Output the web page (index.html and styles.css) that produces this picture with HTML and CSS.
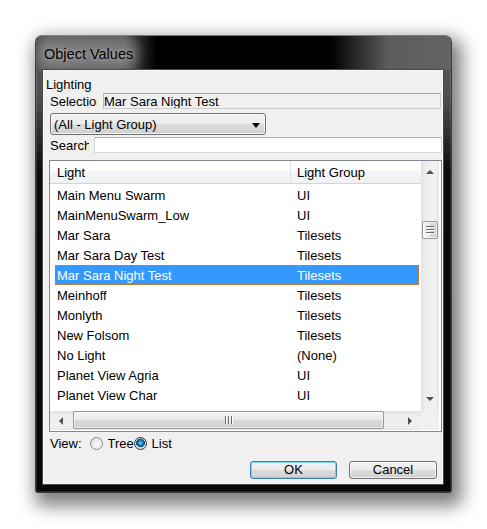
FILE: index.html
```html
<!DOCTYPE html>
<html>
<head>
<meta charset="utf-8">
<title>Object Values</title>
<link rel="stylesheet" href="styles.css">
</head>
<body>
<div class="window">
  <div class="titlebar"><span class="title">Object Values</span></div>
  <div class="client">
    <div class="group-label">Lighting</div>
    <div class="field-row">
      <span class="lbl lbl-sel">Selection</span>
      <div class="textbox readonly">Mar Sara Night Test</div>
    </div>
    <div class="combo"><span class="combo-text">(All - Light Group)</span><span class="combo-arrow"></span></div>
    <div class="field-row">
      <span class="lbl lbl-search">Search</span>
      <div class="textbox search"></div>
    </div>
    <div class="list">
      <div class="list-main">
        <div class="list-header">
          <div class="hcol h1">Light</div>
          <div class="hcol h2">Light Group</div>
        </div>
        <div class="rows">
          <div class="row"><span class="c1">Main Menu Swarm</span><span class="c2">UI</span></div>
          <div class="row"><span class="c1">MainMenuSwarm_Low</span><span class="c2">UI</span></div>
          <div class="row"><span class="c1">Mar Sara</span><span class="c2">Tilesets</span></div>
          <div class="row"><span class="c1">Mar Sara Day Test</span><span class="c2">Tilesets</span></div>
          <div class="row selected"><span class="c1">Mar Sara Night Test</span><span class="c2">Tilesets</span></div>
          <div class="row"><span class="c1">Meinhoff</span><span class="c2">Tilesets</span></div>
          <div class="row"><span class="c1">Monlyth</span><span class="c2">Tilesets</span></div>
          <div class="row"><span class="c1">New Folsom</span><span class="c2">Tilesets</span></div>
          <div class="row"><span class="c1">No Light</span><span class="c2">(None)</span></div>
          <div class="row"><span class="c1">Planet View Agria</span><span class="c2">UI</span></div>
          <div class="row"><span class="c1">Planet View Char</span><span class="c2">UI</span></div>
        </div>
      </div>
      <div class="vscroll">
        <div class="sb-btn sb-up"><span class="arr arr-up"></span></div>
        <div class="sb-track-v"><div class="thumb-v"><span class="grip-h"></span><span class="grip-h"></span><span class="grip-h"></span></div></div>
        <div class="sb-btn sb-down"><span class="arr arr-down"></span></div>
      </div>
      <div class="hscroll">
        <div class="sb-btn sb-left"><span class="arr arr-left"></span></div>
        <div class="sb-track-h"><div class="thumb-h"><span class="grip-v"></span><span class="grip-v"></span><span class="grip-v"></span></div></div>
        <div class="sb-btn sb-right"><span class="arr arr-right"></span></div>
      </div>
      <div class="corner"></div>
    </div>
    <div class="view-row">
      <span class="view-lbl">View:</span>
      <span class="radio r-tree"></span>
      <span class="radio-lbl tree-lbl">Tree</span>
      <span class="radio checked r-list"></span>
      <span class="radio-lbl">List</span>
    </div>
    <div class="buttons">
      <div class="btn btn-default">OK</div>
      <div class="btn btn-cancel">Cancel</div>
    </div>
  </div>
</div>
</body>
</html>
```
FILE: styles.css
```css
html, body {
  margin: 0;
  padding: 0;
  background: #ffffff;
}
body {
  font-family: "Liberation Sans", Arial, sans-serif;
  font-size: 13px;
  color: #000;
  width: 487px;
  height: 529px;
  overflow: hidden;
}
.window {
  box-sizing: border-box;
  width: 417px;
  height: 458px;
  margin: 35px 0 0 35px;
  border: 1px solid #3a3a3a;
  border-top-color: #7a7a7a;
  border-radius: 7px 7px 3px 3px;
  background: linear-gradient(to bottom, #575757 0, #505050 60px, #0c0c0c 135px, #080808 100%);
  box-shadow: inset 0 0 0 1px rgba(255,255,255,0.12), 5px 8px 17px 5px rgba(0,0,0,0.5);
  padding: 0 8px 8px 7px;
  display: flex;
  flex-direction: column;
}
.titlebar {
  box-sizing: border-box;
  height: 34px;
  margin: 0 -8px 0 -7px;
  padding: 4px 0 0 8px;
  line-height: 29px;
  border-radius: 6px 6px 0 0;
  background: linear-gradient(to right, #555555 0, #525252 88px, #000 120px, #000 295px, #5c5c5c 352px, #646464 100%);
}
.title {
  display: inline-block;
  font-size: 14.5px;
  line-height: 22px;
  color: #000;
  background: rgba(255,255,255,0.2);
  border-radius: 8px;
  box-shadow: 0 0 9px 7px rgba(255,255,255,0.2);
  text-shadow: 0 0 6px rgba(255,255,255,0.75);
}
.client {
  box-sizing: border-box;
  width: 400px;
  height: 414px;
  border: 1px solid #f7f7f7;
  box-shadow: 0 0 0 1px #4a4a4a;
  background: #f0f0f0;
  display: flex;
  flex-direction: column;
}
.group-label {
  margin: 6px 0 0 2px;
  height: 14px;
  line-height: 15px;
}
.field-row {
  display: flex;
  margin-top: 2px;
  height: 16px;
  padding-left: 6px;
}
.lbl {
  white-space: nowrap;
  overflow: hidden;
  height: 16px;
  line-height: 18px;
  flex: none;
}
.lbl-sel { width: 47px; margin-right: 6px; }
.lbl-search { width: 39px; margin-right: 5px; }
.textbox {
  box-sizing: border-box;
  height: 16px;
  line-height: 16px;
  overflow: hidden;
  border: 1px solid #cdcdcd;
  border-top-color: #a8a8a8;
  border-left-color: #b8b8b8;
  white-space: nowrap;
}
.readonly { width: 338px; background: #f0f0f0; }
.search { width: 348px; background: #ffffff; border-color: #d4d4d4; border-top-color: #b4b4b4; }
.combo {
  box-sizing: border-box;
  margin: 4px 0 0 6px;
  width: 216px;
  height: 22px;
  border: 1px solid #707070;
  border-radius: 3px;
  background: linear-gradient(#f2f2f2 0, #ebebeb 50%, #dddddd 51%, #cfcfcf 100%);
  box-shadow: inset 0 0 0 1px rgba(255,255,255,0.7);
  display: flex;
  align-items: center;
  justify-content: space-between;
  padding: 2px 5px 0 3px;
  line-height: 20px;
}
.combo-arrow {
  width: 0;
  height: 0;
  border-left: 4px solid transparent;
  border-right: 4px solid transparent;
  border-top: 5px solid #000;
}
.list {
  box-sizing: border-box;
  margin: 7px 0 0 5px;
  width: 393px;
  height: 272px;
  border: 1px solid #828790;
  background: #fff;
  display: grid;
  grid-template-columns: 371px 18px;
  grid-template-rows: 250px 19px;
  padding: 0 2px 1px 0;
}
.list-main {
  overflow: hidden;
  display: flex;
  flex-direction: column;
}
.list-header {
  box-sizing: border-box;
  height: 23px;
  flex: none;
  line-height: 22px;
  display: flex;
  border-bottom: 1px solid #d5d5d5;
  background: linear-gradient(#ffffff 0, #ffffff 45%, #f4f5f7 46%, #f0f1f3 100%);
}
.hcol { box-sizing: border-box; white-space: nowrap; padding-top: 1px; height: 22px; overflow: hidden; }
.h1 { width: 241px; padding-left: 7px; border-right: 1px solid #e0e1e3; }
.h2 { padding-left: 6px; }
.rows { padding-top: 1px; overflow: hidden; }
.row {
  display: flex;
  height: 20px;
  line-height: 22px;
  margin: 0 2px 0 5px;
  padding-left: 2px;
  white-space: nowrap;
}
.row .c1 { width: 240px; flex: none; }
.row.selected {
  background: #3399ff;
  color: #fff;
  outline: 1px dotted #c07a3a;
  outline-offset: -1px;
}
.vscroll {
  display: flex;
  flex-direction: column;
  background: linear-gradient(to right, #e2e2e2 0, #eeeeee 25%, #f1f1f1 75%, #e6e6e6 100%);
}
.sb-btn {
  display: flex;
  align-items: center;
  justify-content: center;
  flex: none;
}
.sb-up { height: 21px; }
.sb-down { height: 24px; }
.sb-track-v { flex: 1; }
.thumb-v {
  box-sizing: border-box;
  margin: 39px 0 0 1px;
  width: 16px;
  height: 18px;
  border: 1px solid #979797;
  border-radius: 2px;
  background: linear-gradient(to right, #f4f4f4 0, #e8e8e8 50%, #d9d9d9 51%, #d2d2d2 100%);
  box-shadow: inset 0 0 0 1px rgba(255,255,255,0.6);
  display: flex;
  flex-direction: column;
  align-items: center;
  justify-content: center;
  gap: 1px;
}
.grip-h {
  width: 8px;
  height: 1px;
  background: #6b6b6b;
  border-bottom: 1px solid #fafafa;
}
.arr { width: 0; height: 0; }
.arr-up {
  border-left: 4px solid transparent;
  border-right: 4px solid transparent;
  border-bottom: 4px solid #505050;
}
.arr-down {
  border-left: 4px solid transparent;
  border-right: 4px solid transparent;
  border-top: 4px solid #505050;
}
.arr-left {
  border-top: 4px solid transparent;
  border-bottom: 4px solid transparent;
  border-right: 4px solid #505050;
}
.arr-right {
  border-top: 4px solid transparent;
  border-bottom: 4px solid transparent;
  border-left: 4px solid #505050;
}
.hscroll {
  display: flex;
  background: linear-gradient(to bottom, #e2e2e2 0, #eeeeee 25%, #f1f1f1 75%, #e6e6e6 100%);
}
.sb-left, .sb-right { width: 22px; }
.sb-track-h { flex: 1; display: flex; align-items: flex-start; }
.thumb-h {
  box-sizing: border-box;
  margin: 0 0 0 1px;
  width: 311px;
  height: 18px;
  border: 1px solid #979797;
  border-radius: 2px;
  background: linear-gradient(to bottom, #f4f4f4 0, #e8e8e8 50%, #d9d9d9 51%, #d2d2d2 100%);
  box-shadow: inset 0 0 0 1px rgba(255,255,255,0.6);
  display: flex;
  align-items: center;
  justify-content: center;
  gap: 1px;
}
.grip-v {
  width: 1px;
  height: 8px;
  background: #6b6b6b;
  border-right: 1px solid #fafafa;
}
.corner { background: #f0f0f0; }
.view-row {
  display: flex;
  align-items: center;
  margin-top: 4px;
  height: 15px;
  line-height: 15px;
  padding-left: 6px;
  white-space: nowrap;
}
.radio {
  box-sizing: border-box;
  flex: none;
  width: 13px;
  height: 13px;
  border-radius: 50%;
  border: 1px solid #8e8f8f;
  background: radial-gradient(circle at 60% 60%, #fbfbfb 0, #ececec 45%, #cfcfcf 100%);
}
.r-tree { margin-left: 8px; }
.r-list { border-color: #2e2e2e; background: radial-gradient(circle at 50% 45%, #8fe0ff 0, #2a98d4 1.6px, #0d5a92 3.6px, #2b4f6a 4.3px, #e4e4e4 4.6px, #f6f6f6 100%); }
.radio-lbl { margin-left: 5px; }
.tree-lbl { width: 26px; overflow: hidden; flex: none; }
.buttons {
  display: flex;
  justify-content: flex-end;
  gap: 12px;
  margin-top: 10px;
  padding-right: 5px;
}
.btn {
  box-sizing: border-box;
  height: 18px;
  line-height: 16px;
  text-align: center;
  border: 1px solid #707070;
  border-radius: 3px;
  background: linear-gradient(#f2f2f2 0, #ebebeb 50%, #dddddd 51%, #cfcfcf 100%);
  box-shadow: inset 0 0 0 1px rgba(255,255,255,0.7);
}
.btn-default {
  width: 87px;
  border-color: #3c7fb1;
  box-shadow: inset 0 0 0 1px rgba(110,205,245,0.85);
}
.btn-cancel { width: 88px; }
```
